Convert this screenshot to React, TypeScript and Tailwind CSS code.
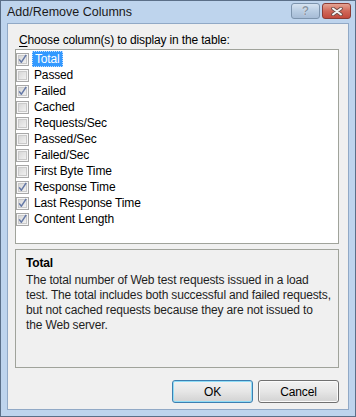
import React from "react";

const items: { label: string; checked: boolean }[] = [
  { label: "Total", checked: true },
  { label: "Passed", checked: false },
  { label: "Failed", checked: true },
  { label: "Cached", checked: false },
  { label: "Requests/Sec", checked: false },
  { label: "Passed/Sec", checked: false },
  { label: "Failed/Sec", checked: false },
  { label: "First Byte Time", checked: false },
  { label: "Response Time", checked: true },
  { label: "Last Response Time", checked: true },
  { label: "Content Length", checked: true },
];

function CheckBox({ checked }: { checked: boolean }) {
  return (
    <svg width="13" height="13" viewBox="0 0 13 13" className="shrink-0">
      <defs>
        <linearGradient id="cbg" x1="0" y1="0" x2="1" y2="1">
          <stop offset="0" stopColor="#d6d6d6" />
          <stop offset="1" stopColor="#f2f2f2" />
        </linearGradient>
      </defs>
      <rect x="0.5" y="0.5" width="12" height="12" fill="#f6f6f6" stroke="#a8a8a8" />
      <rect x="2.5" y="2.5" width="8" height="8" fill="url(#cbg)" stroke="#cacaca" />
      {checked && (
        <path
          d="M3.2 6.4 L5.4 9.2 L10.2 1.8"
          fill="none"
          stroke="#6478a6"
          strokeWidth="1.5"
          strokeLinejoin="round"
        />
      )}
    </svg>
  );
}

export default function App() {
  const font = { fontFamily: '"Liberation Sans", Arial, sans-serif' };
  return (
    <div
      className="w-[356px] h-[417px] bg-[#bed4ed] border border-[#5b6f88] flex flex-col text-[12px] text-black"
      style={font}
    >
      {/* Title bar */}
      <div className="h-[22px] flex items-center pl-[6px] pr-[4px]">
        <span className="text-[12.5px] text-[#1a1a1a] mt-[1px]">Add/Remove Columns</span>
        <div className="ml-auto flex gap-[2px] mt-[-2px]">
          <div className="w-[29px] h-[16px] rounded-[3px] border border-[#7d94ad] bg-gradient-to-b from-[#d6e3f1] via-[#b9cde3] to-[#a6bcd6] flex items-center justify-center">
            <span className="text-[12px] font-bold text-[#8a97a6] leading-none" style={{ textShadow: "0 0 1px #fff" }}>?</span>
          </div>
          <div className="w-[29px] h-[16px] rounded-[3px] border border-[#8b3c35] bg-gradient-to-b from-[#e5a493] via-[#d0685a] to-[#c24a3d] flex items-center justify-center">
            <svg width="12" height="9" viewBox="0 0 12 9">
              <path d="M2 1.5 L10 7.5 M10 1.5 L2 7.5" stroke="#6e4a44" strokeWidth="3.6" strokeLinecap="round" />
              <path d="M2 1.5 L10 7.5 M10 1.5 L2 7.5" stroke="#f4f4f4" strokeWidth="2" strokeLinecap="round" />
            </svg>
          </div>
        </div>
      </div>

      {/* Client area */}
      <div className="mx-[6px] h-[387px] bg-[#f0f0f0] border border-[#91a9c6] flex flex-col tracking-[-0.15px]">
        <div className="mt-[9px] ml-[11px] h-[15px] leading-[15px]">
          <span className="underline underline-offset-2">C</span>hoose column(s) to display in the table:
        </div>
        <div className="mt-[1px] ml-[7px] w-[324px] h-[195px] bg-white border border-[#a0a39b] pt-[1px]">
          {items.map((it, i) => (
            <div key={it.label} className="h-[16px] flex items-center">
              <CheckBox checked={it.checked} />
              {i === 0 ? (
                <span className="ml-[3px] h-[16px] leading-[14px] px-[2px] bg-[#3399ff] text-white border border-dotted border-[#c0dcff]">
                  {it.label}
                </span>
              ) : (
                <span className="ml-[3px] px-[2px] leading-[16px]">{it.label}</span>
              )}
            </div>
          ))}
        </div>
        <div className="mt-[5px] ml-[7px] w-[324px] h-[119px] border border-[#a0a39b] pt-[6px] pl-[10px]">
          <div className="font-bold leading-[15px] mb-[2px]">Total</div>
          <div className="leading-[15px] text-[#1e1e1e] whitespace-nowrap">
            <div>The total number of Web test requests issued in a load</div>
            <div>test. The total includes both successful and failed requests,</div>
            <div>but not cached requests because they are not issued to</div>
            <div>the Web server.</div>
          </div>
        </div>
        <div className="mt-[12px] flex justify-end gap-[5px] pr-[9px]">
          <button className="w-[81px] h-[23px] rounded-[3px] border border-[#3c7fb1] bg-gradient-to-b from-[#f2f2f2] via-[#e6e6e6] to-[#d2d2d2] shadow-[inset_0_0_0_1px_#8fdcf6] text-[12px]">
            OK
          </button>
          <button className="w-[81px] h-[23px] rounded-[3px] border border-[#707070] bg-gradient-to-b from-[#f2f2f2] via-[#e6e6e6] to-[#d2d2d2] shadow-[inset_0_0_0_1px_#fbfbfb] text-[12px]">
            Cancel
          </button>
        </div>
      </div>
    </div>
  );
}
